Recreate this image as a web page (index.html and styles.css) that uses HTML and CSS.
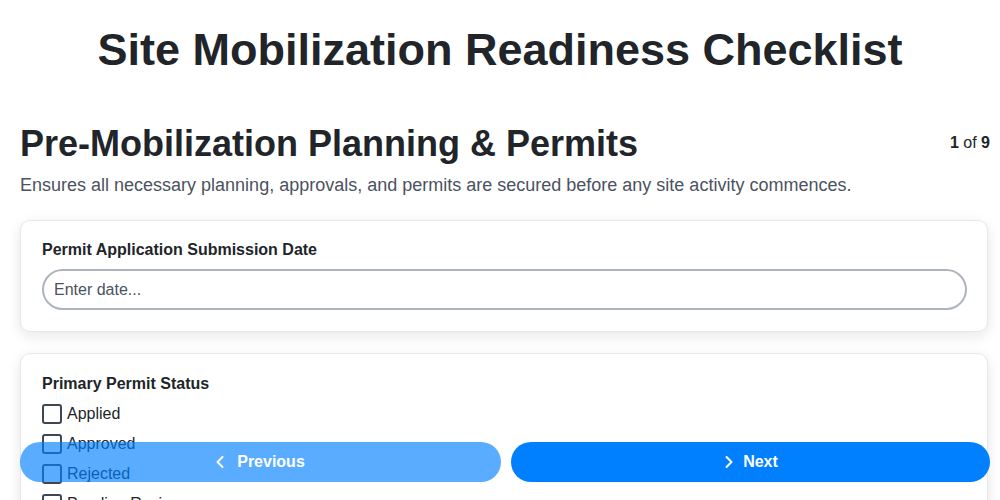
FILE: index.html
```html
<!DOCTYPE html>
<html lang="en">
<head>
<meta charset="utf-8">
<title>Site Mobilization Readiness Checklist</title>
<link rel="stylesheet" href="styles.css">
</head>
<body>
  <h1 class="page-title">Site Mobilization Readiness Checklist</h1>
  <main class="content">
    <div class="section-head">
      <h2 class="section-title">Pre-Mobilization Planning &amp; Permits</h2>
      <div class="progress"><b>1</b> of <b>9</b></div>
    </div>
    <p class="section-desc">Ensures all necessary planning, approvals, and permits are secured before any site activity commences.</p>

    <div class="card">
      <label class="field-label" for="permit-date">Permit Application Submission Date</label>
      <input class="text-input" id="permit-date" type="text" placeholder="Enter date...">
    </div>

    <div class="card">
      <div class="field-label">Primary Permit Status</div>
      <div class="options">
        <label class="option"><input type="checkbox" class="check"><span>Applied</span></label>
        <label class="option"><input type="checkbox" class="check"><span>Approved</span></label>
        <label class="option"><input type="checkbox" class="check"><span>Rejected</span></label>
        <label class="option"><input type="checkbox" class="check"><span>Pending Review</span></label>
      </div>
    </div>
  </main>

  <nav class="nav-bar">
    <button class="nav-btn prev" type="button">
      <svg class="chev" viewBox="0 0 24 24" width="20" height="20" fill="none" stroke="currentColor" stroke-width="2.4" stroke-linecap="round" stroke-linejoin="round"><polyline points="15 18 9 12 15 6"/></svg>
      <span>Previous</span>
    </button>
    <button class="nav-btn next" type="button">
      <svg class="chev" viewBox="0 0 24 24" width="20" height="20" fill="none" stroke="currentColor" stroke-width="2.4" stroke-linecap="round" stroke-linejoin="round"><polyline points="9 18 15 12 9 6"/></svg>
      <span>Next</span>
    </button>
  </nav>
</body>
</html>
```

FILE: styles.css
```css
* { box-sizing: border-box; }

html, body {
  margin: 0;
  padding: 0;
  background: #ffffff;
}

body {
  font-family: "Liberation Sans", Arial, sans-serif;
  color: #212529;
  padding-top: 24px;
}

.page-title {
  margin: 0 0 47px;
  font-size: 45px;
  font-weight: 700;
  line-height: 1.15;
  text-align: center;
  color: #212529;
}

.content {
  padding: 0 10px 80px 20px;
}

.section-head {
  display: flex;
  align-items: center;
  justify-content: space-between;
}

.section-title {
  margin: 0;
  font-size: 36px;
  font-weight: 700;
  line-height: 1.15;
  color: #212529;
}

.progress {
  font-size: 16px;
  line-height: 1.15;
  color: #212529;
}

.progress b { font-weight: 700; }

.section-desc {
  margin: 11px 0 24px;
  font-size: 18px;
  line-height: 1.15;
  color: #4b5260;
}

.card {
  margin: 0 2px 21px 0;
  padding: 20px 20px 21px 21px;
  background: #ffffff;
  border: 1px solid #e7e7ec;
  border-radius: 10px;
  box-shadow: 0 4px 14px rgba(20, 20, 40, 0.10);
}

.card + .card { padding-top: 21px; }

.field-label {
  display: block;
  font-size: 16px;
  font-weight: 700;
  line-height: 1.15;
  color: #212529;
  margin-bottom: 10px;
}

.text-input {
  display: block;
  width: 100%;
  height: 41px;
  padding: 0 10px;
  border: 2px solid #aeb4bc;
  border-radius: 21px;
  font-family: "Liberation Sans", Arial, sans-serif;
  font-size: 16px;
  color: #212529;
  background: #ffffff;
  outline: none;
}

.text-input::placeholder {
  color: #4b5260;
  opacity: 1;
}

.options {
  display: flex;
  flex-direction: column;
  gap: 10px;
}

.option {
  display: flex;
  align-items: center;
  height: 20px;
  font-size: 16px;
  color: #212529;
}

.check {
  appearance: none;
  -webkit-appearance: none;
  width: 20px;
  height: 20px;
  margin: 0 5px 0 0;
  border: 2px solid #3f4654;
  border-radius: 3px;
  background: #ffffff;
  flex: none;
}

.nav-bar {
  position: fixed;
  left: 0;
  right: 0;
  bottom: 18px;
  display: flex;
  gap: 10px;
  padding: 0 10px 0 20px;
}

.nav-btn {
  flex: 1 1 0;
  height: 40px;
  display: flex;
  align-items: center;
  justify-content: center;
  gap: 7px;
  border: none;
  border-radius: 20px;
  background: #0080ff;
  color: #ffffff;
  font-family: "Liberation Sans", Arial, sans-serif;
  font-size: 16px;
  font-weight: 700;
  cursor: pointer;
}

.nav-btn.prev { opacity: 0.65; padding: 0 6px 0 0; }

.nav-btn.next { gap: 4px; padding: 0 4px 0 0; }

.chev { display: block; flex: none; }
```
